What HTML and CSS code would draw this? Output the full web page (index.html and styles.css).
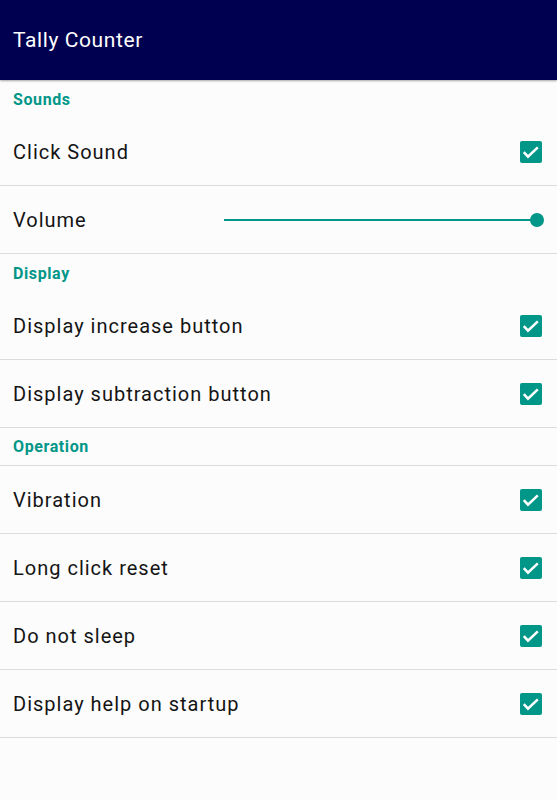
FILE: index.html
```html
<!DOCTYPE html>
<html>
<head>
<meta charset="utf-8">
<link rel="stylesheet" href="styles.css">
</head>
<body>
<header class="appbar"><span class="title">Tally Counter</span></header>
<main class="list">
  <div class="section">Sounds</div>
  <div class="row"><span class="label">Click Sound</span><span class="check"><svg viewBox="0 0 22 22" width="22" height="22"><path d="M3.8 11.2 L8 15.6 L17.8 6.4" fill="none" stroke="#fff" stroke-width="2.6"/></svg></span></div>
  <div class="row"><span class="label">Volume</span><div class="slider"><div class="track"></div><div class="thumb"></div></div></div>
  <div class="section">Display</div>
  <div class="row"><span class="label">Display increase button</span><span class="check"><svg viewBox="0 0 22 22" width="22" height="22"><path d="M3.8 11.2 L8 15.6 L17.8 6.4" fill="none" stroke="#fff" stroke-width="2.6"/></svg></span></div>
  <div class="row"><span class="label">Display subtraction button</span><span class="check"><svg viewBox="0 0 22 22" width="22" height="22"><path d="M3.8 11.2 L8 15.6 L17.8 6.4" fill="none" stroke="#fff" stroke-width="2.6"/></svg></span></div>
  <div class="section divided">Operation</div>
  <div class="row"><span class="label">Vibration</span><span class="check"><svg viewBox="0 0 22 22" width="22" height="22"><path d="M3.8 11.2 L8 15.6 L17.8 6.4" fill="none" stroke="#fff" stroke-width="2.6"/></svg></span></div>
  <div class="row"><span class="label">Long click reset</span><span class="check"><svg viewBox="0 0 22 22" width="22" height="22"><path d="M3.8 11.2 L8 15.6 L17.8 6.4" fill="none" stroke="#fff" stroke-width="2.6"/></svg></span></div>
  <div class="row"><span class="label">Do not sleep</span><span class="check"><svg viewBox="0 0 22 22" width="22" height="22"><path d="M3.8 11.2 L8 15.6 L17.8 6.4" fill="none" stroke="#fff" stroke-width="2.6"/></svg></span></div>
  <div class="row"><span class="label">Display help on startup</span><span class="check"><svg viewBox="0 0 22 22" width="22" height="22"><path d="M3.8 11.2 L8 15.6 L17.8 6.4" fill="none" stroke="#fff" stroke-width="2.6"/></svg></span></div>
</main>
</body>
</html>
```
FILE: styles.css
```css
html, body {
  margin: 0;
  padding: 0;
  background: #fcfcfc;
  font-family: Roboto, "Noto Sans", sans-serif;
}
.appbar {
  height: 80px;
  background: #000050;
  display: flex;
  align-items: center;
  padding-left: 13px;
  box-shadow: 0 1px 2px rgba(0,0,0,0.35);
  position: relative;
}
.title {
  color: #fff;
  font-size: 21px;
  letter-spacing: 0.6px;
}
.list {
  display: flex;
  flex-direction: column;
}
.section {
  height: 38px;
  box-sizing: border-box;
  display: flex;
  align-items: center;
  padding-left: 13px;
  color: #009688;
  font-weight: bold;
  font-size: 16px;
  letter-spacing: 0.6px;
}
.section.divided {
  border-bottom: 1px solid #dcdcdc;
}
.row {
  height: 68px;
  box-sizing: border-box;
  border-bottom: 1px solid #dcdcdc;
  display: flex;
  align-items: center;
  justify-content: space-between;
  padding: 0 15px 0 13px;
}
.label {
  font-size: 20px;
  letter-spacing: 1px;
  color: #141414;
}
.check {
  width: 22px;
  height: 22px;
  background: #009688;
  border-radius: 2px;
  display: flex;
}
.slider {
  position: relative;
  width: 320px;
  height: 14px;
  margin-right: -2px;
  display: flex;
  align-items: center;
}
.track {
  height: 2px;
  width: 313px;
  background: #009688;
}
.thumb {
  position: absolute;
  right: 0;
  top: 0;
  width: 14px;
  height: 14px;
  border-radius: 50%;
  background: #009688;
}
```
